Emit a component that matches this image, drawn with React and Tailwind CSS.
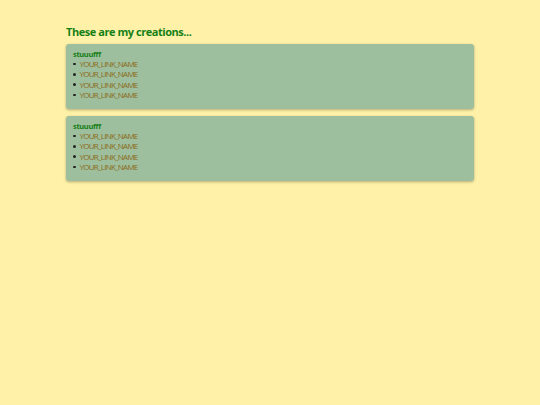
export default function App() {
  const groups = [
    { title: 'stuuufff', links: ['YOUR_LINK_NAME', 'YOUR_LINK_NAME', 'YOUR_LINK_NAME', 'YOUR_LINK_NAME'] },
    { title: 'stuuufff', links: ['YOUR_LINK_NAME', 'YOUR_LINK_NAME', 'YOUR_LINK_NAME', 'YOUR_LINK_NAME'] },
  ];

  return (
    <div className="min-h-[405px] w-full bg-[#fff2a8] pt-[24px]" style={{ fontFamily: '"Open Sans", "Noto Sans", sans-serif' }}>
      <div className="mx-auto w-[408px]">
        <h1 className="mb-[5px] text-[11px] font-bold leading-[15px] tracking-[-0.45px] text-[#168016]">These are my creations...</h1>
        <div className="flex flex-col gap-[7px]">
          {groups.map((g, i) => (
            <div key={i} className="h-[65px] rounded-[3px] bg-[#9ebf9e] px-[7px] pt-[4px] shadow-[0_1px_3px_rgba(0,0,0,0.3)]">
              <h2 className="text-[7.5px] font-bold leading-[12px] tracking-[-0.35px] text-[#168016]">{g.title}</h2>
              <ul className="-mt-[1px]">
                {g.links.map((l, j) => (
                  <li key={j} className="flex h-[10.3px] items-center">
                    <span className="mr-[4px] h-[2.5px] w-[2.5px] rounded-full bg-[#222]" />
                    <a className="text-[8px] leading-[10px] tracking-[-0.75px] text-[#8b6a17]">{l}</a>
                  </li>
                ))}
              </ul>
            </div>
          ))}
        </div>
      </div>
    </div>
  );
}
